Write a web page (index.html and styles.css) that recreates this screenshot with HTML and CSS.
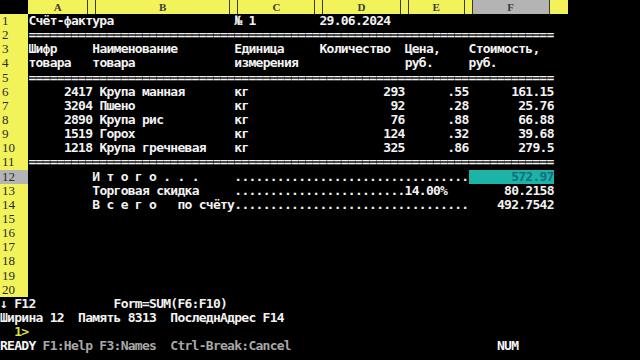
FILE: index.html
```html
<!DOCTYPE html>
<html lang="ru">
<head>
    <meta charset="UTF-8" />
    <meta name="viewport" content="width=device-width, initial-scale=1.0"/>
    <title>Счёт-фактура</title>
    <link rel="stylesheet" href="styles.css">
</head>
<body>
<div class="screen">
    <div class="head">
        <div class="corner"></div>
        <div class="colhead first"><span>A</span></div>
        <div class="colhead"><span>B</span></div>
        <div class="colhead"><span>C</span></div>
        <div class="colhead"><span>D</span></div>
        <div class="colhead"><span>E</span></div>
        <div class="colhead active"><span>F</span></div>
        <div class="colhead rest"><span></span></div>
    </div>

    <div class="row"><div class="rn">1</div><div class="c">Счёт-фактура</div><div class="c"></div><div class="c">№ 1</div><div class="c">29.06.2024</div></div>
    <div class="row"><div class="rn">2</div><div class="c">==========================================================================</div></div>
    <div class="row"><div class="rn">3</div><div class="c">Шифр</div><div class="c">Наименование</div><div class="c">Единица</div><div class="c">Количество</div><div class="c">Цена,</div><div class="c">Стоимость,</div></div>
    <div class="row"><div class="rn">4</div><div class="c">товара</div><div class="c">товара</div><div class="c">измерения</div><div class="c"></div><div class="c">руб.</div><div class="c">руб.</div></div>
    <div class="row"><div class="rn">5</div><div class="c">==========================================================================</div></div>
    <div class="row"><div class="rn">6</div><div class="c n">2417</div><div class="c"> Крупа манная</div><div class="c">кг</div><div class="c n">293</div><div class="c n">.55</div><div class="c n">161.15</div></div>
    <div class="row"><div class="rn">7</div><div class="c n">3204</div><div class="c"> Пшено</div><div class="c">кг</div><div class="c n">92</div><div class="c n">.28</div><div class="c n">25.76</div></div>
    <div class="row"><div class="rn">8</div><div class="c n">2890</div><div class="c"> Крупа рис</div><div class="c">кг</div><div class="c n">76</div><div class="c n">.88</div><div class="c n">66.88</div></div>
    <div class="row"><div class="rn">9</div><div class="c n">1519</div><div class="c"> Горох</div><div class="c">кг</div><div class="c n">124</div><div class="c n">.32</div><div class="c n">39.68</div></div>
    <div class="row"><div class="rn">10</div><div class="c n">1218</div><div class="c"> Крупа гречневая</div><div class="c">кг</div><div class="c n">325</div><div class="c n">.86</div><div class="c n">279.5</div></div>
    <div class="row"><div class="rn">11</div><div class="c">==========================================================================</div></div>
    <div class="row"><div class="rn cur-row">12</div><div class="c"></div><div class="c">И т о г о . . .</div><div class="c">.................................</div><div class="c"></div><div class="c"></div><div class="c n cur">572.97</div></div>
    <div class="row"><div class="rn">13</div><div class="c"></div><div class="c">Торговая скидка</div><div class="c">........................14.00%</div><div class="c"></div><div class="c"></div><div class="c n">80.2158</div></div>
    <div class="row"><div class="rn">14</div><div class="c"></div><div class="c">В с е г о   по счёту</div><div class="c">.................................</div><div class="c"></div><div class="c"></div><div class="c n">492.7542</div></div>
    <div class="row"><div class="rn">15</div></div>
    <div class="row"><div class="rn">16</div></div>
    <div class="row"><div class="rn">17</div></div>
    <div class="row"><div class="rn">18</div></div>
    <div class="row"><div class="rn">19</div></div>
    <div class="row"><div class="rn">20</div></div>

    <div class="line">↓ F12           Form=SUM(F6:F10)</div>
    <div class="line">Ширина 12  Память 8313  ПоследнАдрес F14</div>
    <div class="line prompt">  1&gt;</div>
    <div class="line status">
        <div><span class="mode">READY</span><span class="keys"> F1:Help F3:Names  Ctrl-Break:Cancel</span></div>
        <div class="mode">NUM</div>
    </div>
</div>
</body>
</html>
```

FILE: styles.css
```css
:root {
    --cw: 7.1px;
    --rh: 14.15px;
}
body {
    margin: 0;
    width: 640px;
    height: 360px;
    overflow: hidden;
    background-color: black;
    color: #f2f2f2;
    font-family: "DejaVu Sans Mono", monospace;
    font-weight: bold;
    font-size: 13px;
    letter-spacing: -0.73px;
}
.screen {
    width: calc(80 * var(--cw));
}
.head, .row {
    display: grid;
    grid-template-columns:
        calc(4 * var(--cw)) calc(9 * var(--cw)) calc(20 * var(--cw))
        calc(12 * var(--cw)) calc(12 * var(--cw)) calc(9 * var(--cw))
        calc(12 * var(--cw)) calc(2 * var(--cw));
}
.head {
    height: 14px;
}
.corner {
    background-color: black;
}
.colhead {
    background-color: #f2f25a;
    padding: 0 4px 0 3px;
}
.colhead span {
    display: block;
    height: 14px;
    border-left: 1px solid #3a3a2a;
    border-right: 1px solid #3a3a2a;
    text-align: center;
    color: #3a3a3a;
    font-family: "Liberation Serif", serif;
    font-size: 11px;
    line-height: 14px;
    letter-spacing: 0;
}
.colhead.first {
    padding-left: 0;
}
.colhead.first span {
    border-left: none;
}
.colhead.active span {
    background-color: #b4b4b4;
}
.colhead.rest {
    padding: 0;
}
.colhead.rest span {
    border: none;
}
.row {
    height: var(--rh);
    line-height: var(--rh);
}
.rn {
    background-color: #f2f25a;
    color: #2a2a2a;
    padding-left: 2px;
    font-family: "Liberation Serif", serif;
    font-weight: normal;
    font-size: 13px;
    letter-spacing: 0;
}
.rn.cur-row {
    background-color: #b4b4b4;
}
.c {
    white-space: pre;
    min-width: 0;
}
.c.n {
    text-align: right;
}
.c.cur {
    background-color: #1bb4a6;
    color: #146f80;
}
.line {
    height: var(--rh);
    line-height: var(--rh);
    white-space: pre;
}
.prompt {
    color: #dcdc4a;
}
.status {
    display: grid;
    grid-template-columns: calc(70 * var(--cw)) auto;
}
.keys {
    color: #a8a8a8;
}
.mode {
    color: #f4f4f4;
}
```
